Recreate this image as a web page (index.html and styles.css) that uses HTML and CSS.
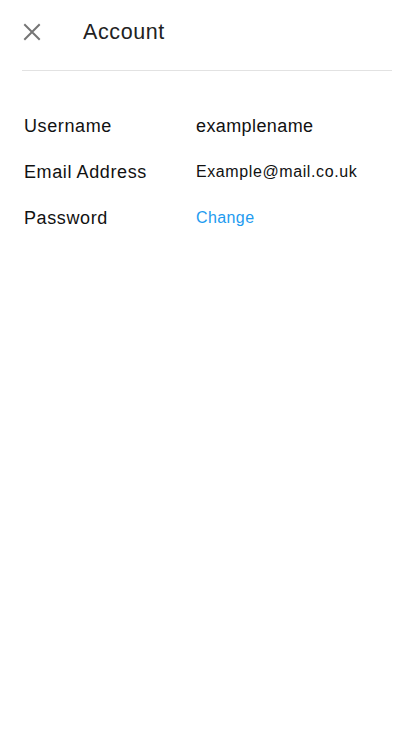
FILE: index.html
```html
<!DOCTYPE html>
<html>
<head>
<meta charset="utf-8">
<link rel="stylesheet" href="styles.css">
</head>
<body>
<div class="page">
  <header class="header">
    <svg class="close" width="18" height="18" viewBox="0 0 18 18"><path d="M2 2L16 16M16 2L2 16" stroke="#757575" stroke-width="2" stroke-linecap="square"/></svg>
    <h1 class="title">Account</h1>
  </header>
  <div class="divider"></div>
  <div class="rows">
    <div class="row"><span class="label">Username</span><span class="value">examplename</span></div>
    <div class="row"><span class="label">Email Address</span><span class="value small">Example@mail.co.uk</span></div>
    <div class="row"><span class="label">Password</span><a class="value link">Change</a></div>
  </div>
</div>
</body>
</html>
```
FILE: styles.css
```css
* { box-sizing: border-box; }
html, body { margin: 0; padding: 0; background: #fff; }
body { font-family: "Liberation Sans", Arial, sans-serif; color: #111; }
.page { padding: 0 22px; }
.header { display: flex; align-items: center; height: 64px; padding-left: 1px; }
.close { display: block; margin-right: 42px; }
.title { margin: 0; font-size: 21.5px; font-weight: normal; color: #222; letter-spacing: 0.6px; }
.divider { height: 1px; background: #e2e2e2; margin-top: 6px; }
.rows { padding: 44px 0 0 2px; display: flex; flex-direction: column; gap: 24px; }
.row { display: flex; align-items: center; height: 22px; }
.label { width: 172px; font-size: 18px; letter-spacing: 0.6px; color: #111; }
.value { font-size: 18px; letter-spacing: 0.4px; color: #111; }
.value.small { font-size: 16px; letter-spacing: 0.6px; }
.link { font-size: 16px; color: #1e9bf0; letter-spacing: 0.4px; }
```
